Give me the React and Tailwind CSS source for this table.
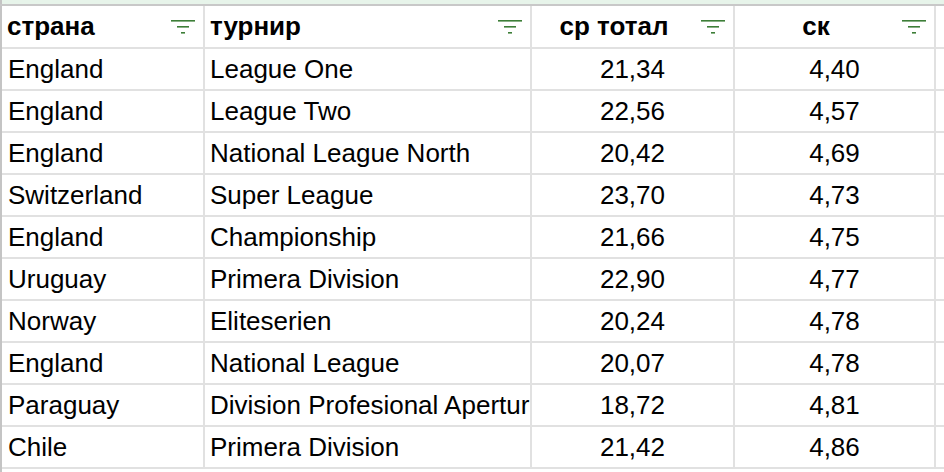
const headers = ['страна', 'турнир', 'ср тотал', 'ск']

const rows = [
  ['England', 'League One', '21,34', '4,40'],
  ['England', 'League Two', '22,56', '4,57'],
  ['England', 'National League North', '20,42', '4,69'],
  ['Switzerland', 'Super League', '23,70', '4,73'],
  ['England', 'Championship', '21,66', '4,75'],
  ['Uruguay', 'Primera Division', '22,90', '4,77'],
  ['Norway', 'Eliteserien', '20,24', '4,78'],
  ['England', 'National League', '20,07', '4,78'],
  ['Paraguay', 'Division Profesional Apertura', '18,72', '4,81'],
  ['Chile', 'Primera Division', '21,42', '4,86'],
]

const widths = ['w-[203px]', 'w-[327px]', 'w-[203px]', 'w-[201px]']

function FilterIcon() {
  return (
    <svg width="24" height="14" viewBox="0 0 24 14" className="shrink-0">
      <rect x="0" y="0" width="24" height="1.6" fill="#3d7e38" />
      <rect x="6" y="6" width="12" height="1.6" fill="#3d7e38" />
      <rect x="10" y="12" width="4" height="1.6" fill="#3d7e38" />
    </svg>
  )
}

export default function App() {
  return (
    <div className="w-[944px] h-[472px] overflow-hidden bg-white text-black font-['Liberation_Sans',Arial,sans-serif] text-[26px]">
      <div className="h-[4px] bg-[#e7f4ea] border-l-2 border-[#c4c4c4]" />
      <div className="h-[2px] bg-[#c8c8c8]" />
      <div className="border-l-2 border-[#c4c4c4]">
        <div className="flex h-[43px] border-b-2 border-[#e1e1e1]">
          {headers.map((h, i) => (
            <div
              key={h}
              className={`${widths[i]} shrink-0 flex items-center border-r-2 border-[#e1e1e1] pr-[8px] ${i < 2 ? 'pl-[5px]' : 'pl-[4px]'}`}
            >
              <span className={`flex-1 font-bold whitespace-nowrap ${i < 2 ? 'text-left' : 'text-center pr-[9px]'}`}>{h}</span>
              <FilterIcon />
            </div>
          ))}
          <div className="flex-1" />
        </div>
        {rows.map((r, ri) => (
          <div key={ri} className="flex h-[42px] border-b-2 border-[#e1e1e1]">
            {r.map((c, i) => (
              <div
                key={i}
                className={`${widths[i]} shrink-0 flex items-center overflow-hidden whitespace-nowrap border-r-2 border-[#e1e1e1] ${
                  i === 0 ? 'pl-[6px]' : i === 1 ? 'pl-[5px]' : 'justify-center'
                }`}
              >
                {c}
              </div>
            ))}
            <div className="flex-1" />
          </div>
        ))}
        <div className="h-[10px]" />
      </div>
    </div>
  )
}
